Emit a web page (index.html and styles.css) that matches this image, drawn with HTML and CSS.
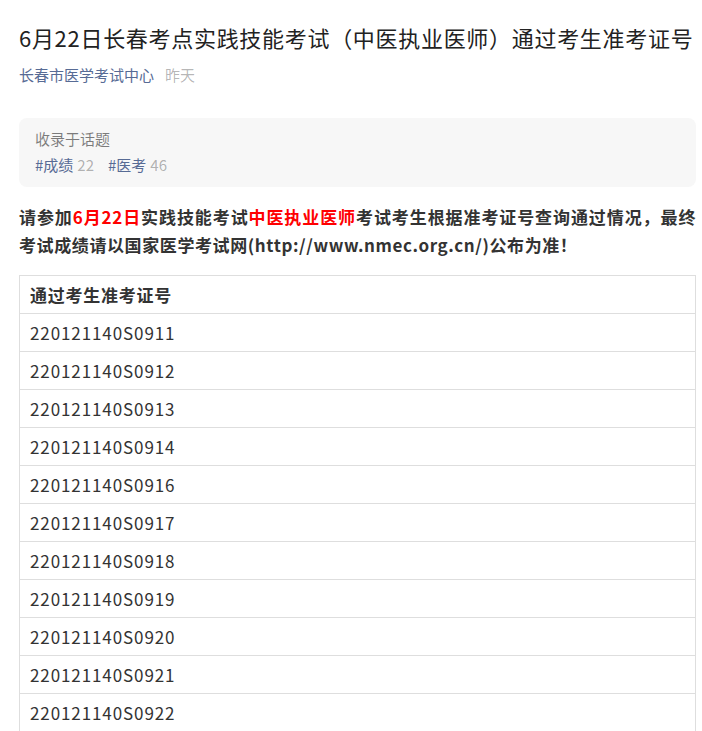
FILE: index.html
```html
<!DOCTYPE html>
<html lang="zh-CN">
<head>
<meta charset="utf-8">
<title>6月22日长春考点实践技能考试（中医执业医师）通过考生准考证号</title>
<link rel="stylesheet" href="styles.css">
</head>
<body>
<div class="page">
  <h1 class="title">6月22日长春考点实践技能考试（中医执业医师）通过考生准考证号</h1>
  <div class="meta"><span class="author">长春市医学考试中心</span><span class="time">昨天</span></div>
  <div class="topic">
    <div class="topic-label">收录于话题</div>
    <div class="topic-tags">
      <span class="tag">#成绩<span class="count">22</span></span>
      <span class="tag">#医考<span class="count">46</span></span>
    </div>
  </div>
  <p class="notice">请参加<span class="red">6月22日</span>实践技能考试<span class="red">中医执业医师</span>考试考生根据准考证号查询通过情况，最终考试成绩请以国家医学考试网(http://www.nmec.org.cn/)公布为准！</p>
  <table class="list">
    <thead>
      <tr><th>通过考生准考证号</th></tr>
    </thead>
    <tbody>
      <tr><td>220121140S0911</td></tr>
      <tr><td>220121140S0912</td></tr>
      <tr><td>220121140S0913</td></tr>
      <tr><td>220121140S0914</td></tr>
      <tr><td>220121140S0916</td></tr>
      <tr><td>220121140S0917</td></tr>
      <tr><td>220121140S0918</td></tr>
      <tr><td>220121140S0919</td></tr>
      <tr><td>220121140S0920</td></tr>
      <tr><td>220121140S0921</td></tr>
      <tr><td>220121140S0922</td></tr>
    </tbody>
  </table>
</div>
</body>
</html>
```
FILE: styles.css
```css
html, body {
  margin: 0;
  padding: 0;
  background: #fff;
}
body {
  font-family: "Noto Sans CJK SC", "Noto Sans", sans-serif;
  color: #333;
}
.page {
  padding: 22px 6px 0 19px;
}
.title {
  margin: 0;
  font-size: 22px;
  font-weight: 400;
  line-height: 30px;
  letter-spacing: 0.7px;
  color: #222;
  white-space: nowrap;
}
.meta {
  margin-top: 12px;
  font-size: 15px;
  line-height: 22px;
  display: flex;
  gap: 11px;
}
.author {
  color: #576b95;
}
.time {
  color: rgba(0, 0, 0, 0.3);
}
.topic {
  margin-top: 32px;
  background: #f7f7f7;
  border-radius: 8px;
  padding: 8px 16px 9px;
  font-size: 15px;
  line-height: 26px;
}
.topic-label {
  color: rgba(0, 0, 0, 0.5);
}
.topic-tags {
  display: flex;
  gap: 14px;
}
.tag {
  color: #576b95;
}
.count {
  color: rgba(0, 0, 0, 0.3);
  margin-left: 4px;
}
.notice {
  margin: 16px 0 16px;
  font-size: 17px;
  line-height: 28px;
  font-weight: 700;
  letter-spacing: 0.6px;
  text-align: justify;
  color: #333;
}
.red {
  color: #ff0000;
}
.list {
  width: 100%;
  border-collapse: collapse;
  font-size: 17px;
}
.list th,
.list td {
  border: 1px solid #dedede;
  height: 38px;
  padding: 0 10px;
  box-sizing: border-box;
  text-align: left;
  line-height: 26px;
  letter-spacing: 0.9px;
  color: #333;
}
.list th {
  font-weight: 700;
  letter-spacing: 0.75px;
}
```
